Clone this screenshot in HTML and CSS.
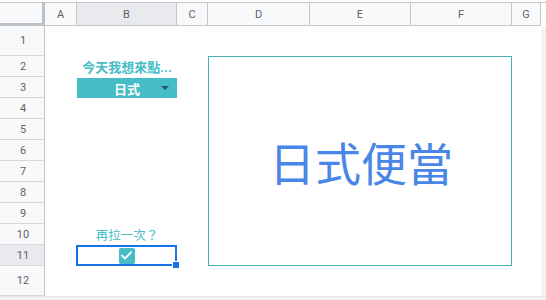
FILE: index.html
```html
<!DOCTYPE html>
<html>
<head>
<meta charset="utf-8">
<link rel="stylesheet" href="styles.css">
</head>
<body>
<div class="sheet">
  <div class="toppad"></div>
  <div class="colheads">
    <div class="corner"></div>
    <div class="ch w-a">A</div>
    <div class="ch w-b sel">B</div>
    <div class="ch w-c">C</div>
    <div class="ch w-d">D</div>
    <div class="ch w-e">E</div>
    <div class="ch w-f">F</div>
    <div class="ch w-g">G</div>
    <div class="ch-scroll"></div>
  </div>
  <div class="rowheads">
    <div class="rh tall">1</div>
    <div class="rh">2</div>
    <div class="rh">3</div>
    <div class="rh">4</div>
    <div class="rh">5</div>
    <div class="rh">6</div>
    <div class="rh">7</div>
    <div class="rh">8</div>
    <div class="rh">9</div>
    <div class="rh">10</div>
    <div class="rh sel">11</div>
    <div class="rh tall">12</div>
  </div>
  <div class="body">
    <div class="cell-b2">今天我想來點...</div>
    <div class="cell-b3"><span></span><span class="val">日式</span><span class="arrow"></span></div>
    <div class="merged">日式便當</div>
    <div class="cell-b10">再拉一次？</div>
    <div class="cell-b11">
      <div class="checkbox">
        <svg width="11" height="9" viewBox="0 0 11 9"><path d="M1 4.6 L4 7.4 L10 1.4" fill="none" stroke="#fff" stroke-width="1.9" stroke-linecap="square"/></svg>
      </div>
      <div class="handle"></div>
    </div>
  </div>
  <div class="scroll"></div>
  <div class="bottom"></div>
</div>
</body>
</html>
```
FILE: styles.css
```css
html, body {
  margin: 0;
  padding: 0;
  background: #fff;
}
body {
  width: 546px;
  height: 300px;
  overflow: hidden;
  font-family: Roboto, "Noto Sans CJK TC", sans-serif;
}
.sheet {
  display: grid;
  grid-template-columns: 45px 496px 5px;
  grid-template-rows: 2px 24px 270px 4px;
}
.toppad {
  grid-column: 1 / -1;
  background: #fff;
}
.colheads {
  grid-column: 1 / -1;
  display: flex;
  background: #f8f9fa;
  border-top: 1px solid #c4c7c5;
  box-sizing: border-box;
}
.corner {
  width: 45px;
  flex: none;
  box-sizing: border-box;
  border-right: 3px solid #bdc1c6;
  border-bottom: 3px solid #bdc1c6;
  background: #f8f9fa;
}
.ch {
  flex: none;
  box-sizing: border-box;
  border-right: 1px solid #c4c7c5;
  border-bottom: 1px solid #c4c7c5;
  display: flex;
  align-items: center;
  justify-content: center;
  font-size: 11px;
  color: #5f6368;
}
.ch.sel { background: #e8eaed; }
.w-a { width: 32px; }
.w-b { width: 100px; }
.w-c { width: 31px; }
.w-d { width: 102px; }
.w-e { width: 101px; }
.w-f { width: 101px; }
.w-g { width: 29px; }
.ch-scroll {
  flex: 1;
  background: #fff;
}
.rowheads {
  display: flex;
  flex-direction: column;
  background: #f8f9fa;
  border-right: 1px solid #c4c7c5;
  box-sizing: border-box;
}
.rh {
  height: 21px;
  flex: none;
  box-sizing: border-box;
  border-bottom: 1px solid #d6d8da;
  display: flex;
  align-items: center;
  justify-content: center;
  font-size: 11px;
  color: #5f6368;
  padding-left: 2px;
}
.rh.tall { height: 30px; }
.rh.sel { background: #e8eaed; }
.body {
  display: grid;
  grid-template-columns: 32px 100px 31px 102px 101px 101px 29px;
  grid-template-rows: 30px repeat(10, 21px) 30px;
  background: #fff;
}
.cell-b2 {
  grid-column: 2;
  grid-row: 2;
  display: flex;
  align-items: center;
  justify-content: center;
  font-weight: bold;
  font-size: 13px;
  color: #46bdc6;
  white-space: nowrap;
}
.cell-b3 {
  grid-column: 2;
  grid-row: 3;
  background: #46bdc6;
  display: grid;
  grid-template-columns: 1fr auto 1fr;
  align-items: center;
  margin-top: 1px;
}
.cell-b3 .val {
  color: #fff;
  font-weight: bold;
  font-size: 13px;
}
.arrow {
  justify-self: end;
  margin-right: 8px;
  width: 0;
  height: 0;
  border-left: 4px solid transparent;
  border-right: 4px solid transparent;
  border-top: 4px solid #2a5668;
}
.merged {
  grid-column: 4 / 7;
  grid-row: 2 / 12;
  border: 1px solid #48b0b9;
  box-sizing: border-box;
  display: flex;
  align-items: center;
  justify-content: center;
  font-family: "Noto Sans CJK TC", sans-serif;
  font-size: 46px;
  color: #4a86e8;
  padding-left: 2px;
}
.cell-b10 {
  grid-column: 2;
  grid-row: 10;
  display: flex;
  align-items: center;
  justify-content: center;
  font-size: 12.5px;
  color: #46bdc6;
  white-space: nowrap;
}
.cell-b11 {
  grid-column: 2;
  grid-row: 11;
  position: relative;
  margin-left: -1px;
  border: 2px solid #1a73e8;
  box-sizing: border-box;
  display: flex;
  align-items: center;
  justify-content: center;
}
.checkbox {
  width: 16px;
  height: 16px;
  background: #46bdc6;
  border-radius: 2px;
  display: flex;
  align-items: center;
  justify-content: center;
}
.handle {
  position: absolute;
  right: -5px;
  bottom: -5px;
  width: 6px;
  height: 6px;
  background: #1a73e8;
  border: 1px solid #fff;
}
.scroll {
  background: #f1f3f4;
  border-left: 1px solid #fafafa;
}
.bottom {
  grid-column: 1 / -1;
  background: #f1f3f4;
  border-top: 1px solid #e8e8e8;
}
```
